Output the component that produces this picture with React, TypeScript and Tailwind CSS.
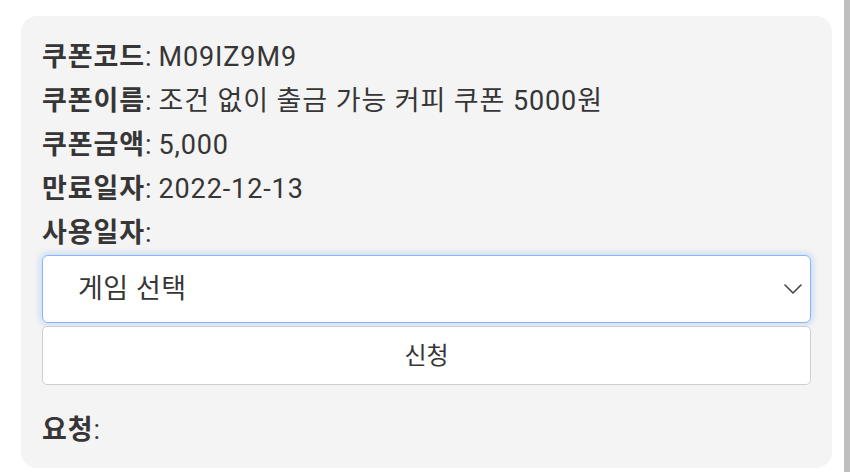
export default function App() {
  const rows = [
    { label: '쿠폰코드', value: 'M09IZ9M9' },
    { label: '쿠폰이름', value: '조건 없이 출금 가능 커피 쿠폰 5000원' },
    { label: '쿠폰금액', value: '5,000' },
    { label: '만료일자', value: '2022-12-13' },
    { label: '사용일자', value: '' },
  ];

  return (
    <div
      className="flex w-[850px] h-[472px] bg-white overflow-hidden text-[#363636]"
      style={{ fontFamily: 'Roboto, "Noto Sans CJK KR", sans-serif' }}
    >
      <div className="flex-1 pl-[21px] pr-[12px] pt-[16px]">
        <div className="bg-[#f4f4f4] rounded-[16px] px-[21px] pt-[19px] pb-[16px] h-[452px]">
          {rows.map((r) => (
            <div key={r.label} className="h-[44px] flex items-center text-[27px] tracking-[0.9px]">
              <span className="font-bold">{r.label}</span>
              <span>:</span>
              {r.value && <span className="ml-[6px]">{r.value}</span>}
            </div>
          ))}

          <div className="h-[68px] bg-white border border-[#86b7fe] rounded-[6px] shadow-[0_0_6px_2px_rgba(13,110,253,0.18)] flex items-center justify-between pl-[35px] pr-[8px]">
            <span className="text-[27px] tracking-[0.5px]">게임 선택</span>
            <svg width="18" height="10" viewBox="0 0 18 10" fill="none">
              <path d="M1 1 L9 9 L17 1" stroke="#444" strokeWidth="1.6" strokeLinecap="round" strokeLinejoin="round" />
            </svg>
          </div>

          <button className="mt-[3px] w-full h-[59px] bg-white border border-[#cfcfcf] rounded-[5px] text-[24px] text-[#363636]">
            신청
          </button>

          <div className="mt-[23px] h-[44px] flex items-center text-[27px] tracking-[0.9px]">
            <span className="font-bold">요청</span>
            <span>:</span>
          </div>
        </div>
      </div>
      <div className="w-[6px] h-full bg-[#bfbfbf]" />
    </div>
  );
}
